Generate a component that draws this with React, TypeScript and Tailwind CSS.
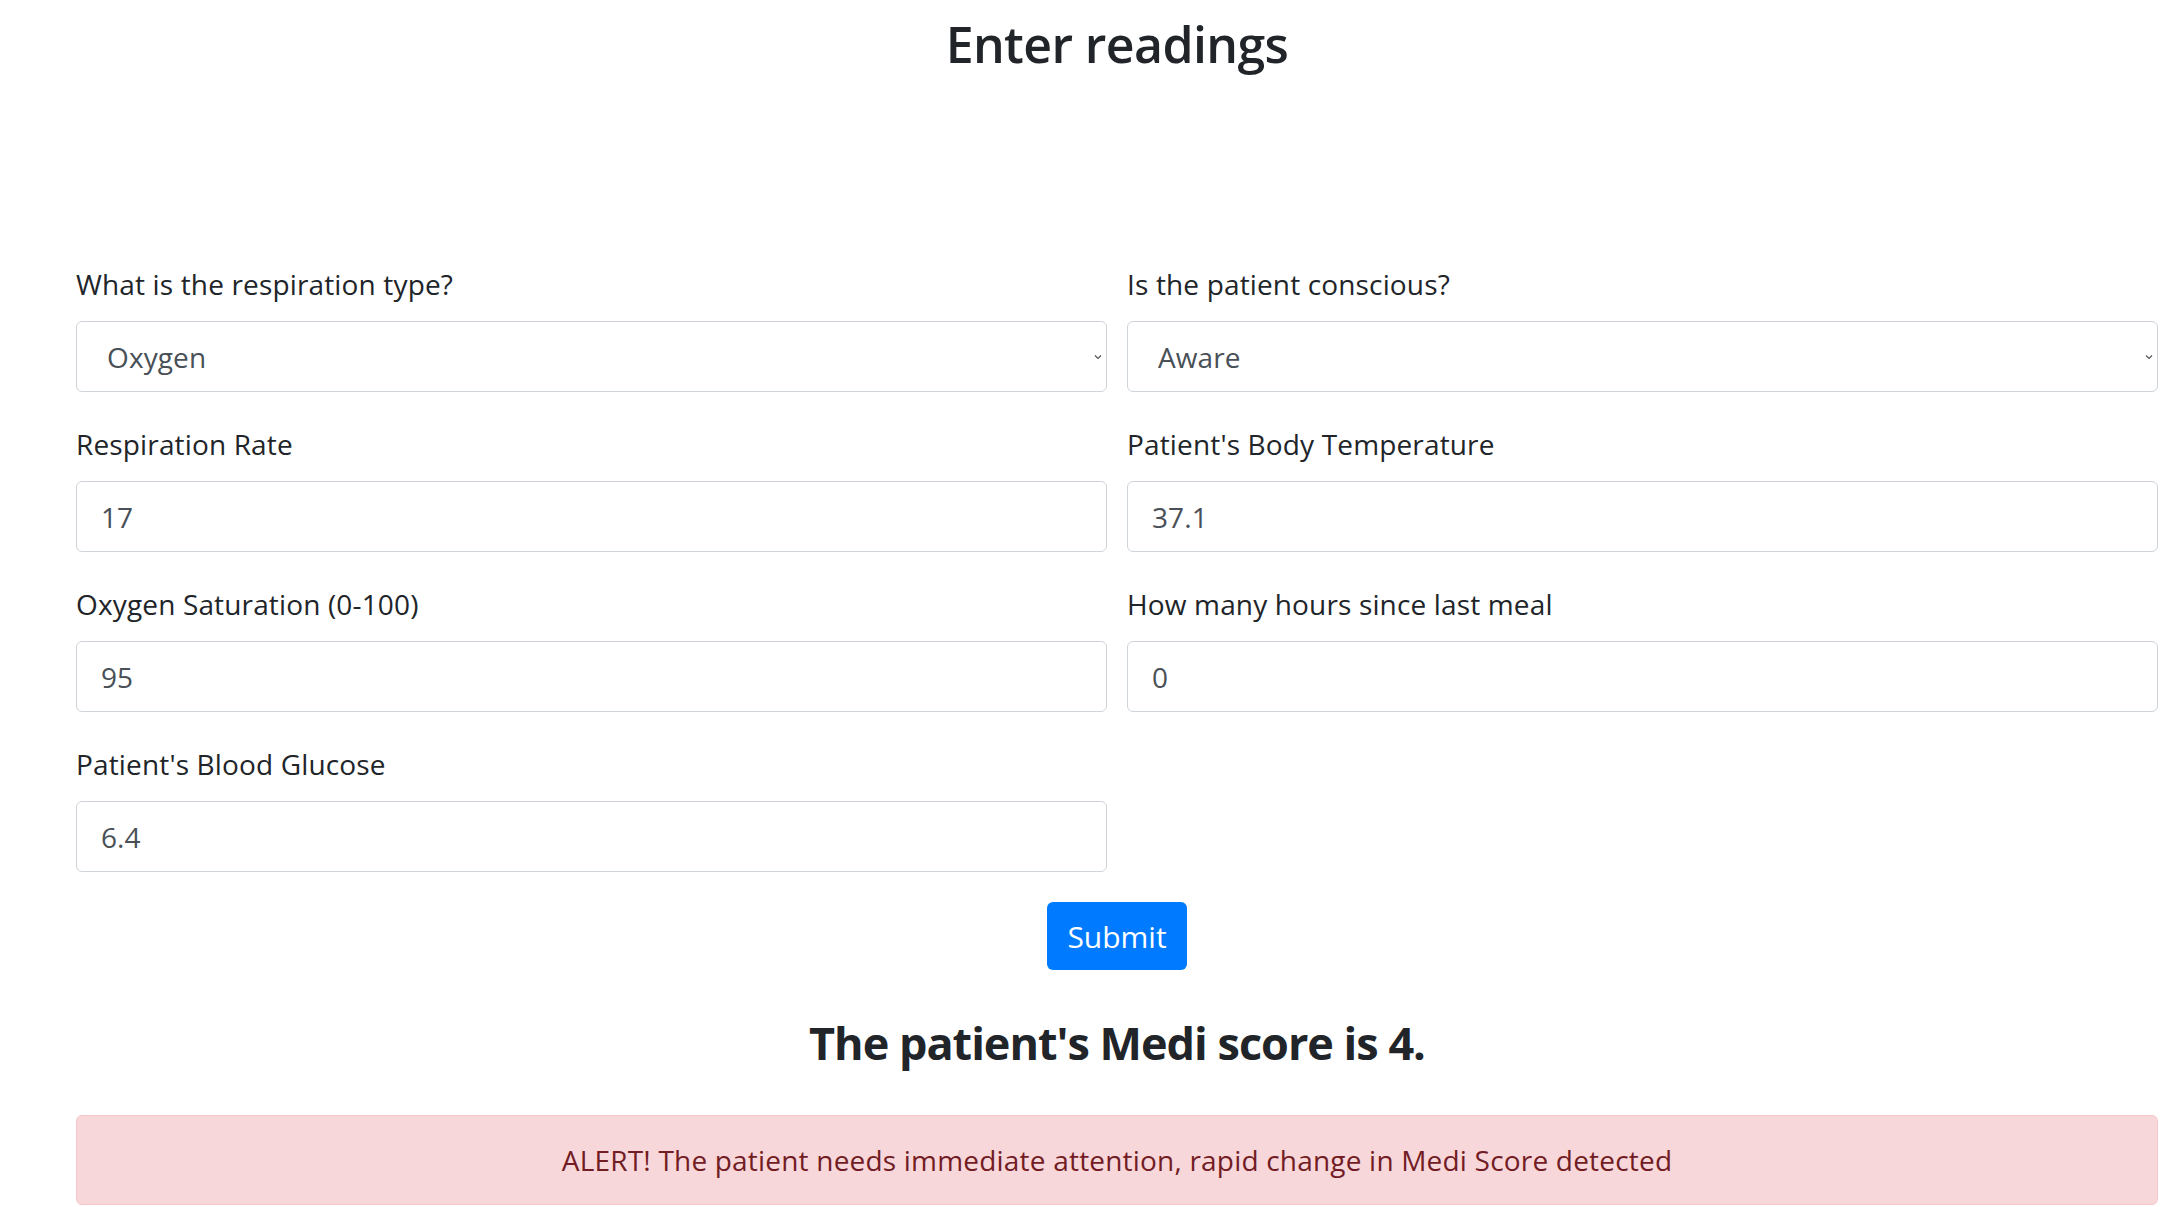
import React from 'react';

const Label = ({ children }: { children: React.ReactNode }) => (
  <label className="mb-[17px] block text-[28px] leading-[40px] tracking-[0.15px] text-[#212529]">{children}</label>
);

const inputCls =
  'block h-[71px] w-full rounded-[6px] border border-[#ced4da] bg-white px-[24px] text-[28px] tracking-[0.1px] text-[#495057] outline-none';

const TextField = ({ label, value }: { label: string; value: string }) => (
  <div>
    <Label>{label}</Label>
    <input type="text" defaultValue={value} className={inputCls} />
  </div>
);

const SelectField = ({ label, value, options }: { label: string; value: string; options: string[] }) => (
  <div>
    <Label>{label}</Label>
    <div className="relative">
      <select defaultValue={value} className={inputCls + ' appearance-none pl-[30px]'}>
        {options.map(o => (
          <option key={o}>{o}</option>
        ))}
      </select>
      <svg className="pointer-events-none absolute right-[5px] top-1/2 -translate-y-1/2" width="8" height="5" viewBox="0 0 8 5">
        <path d="M1 1l3 3 3-3" fill="none" stroke="#555" strokeWidth="1.2" />
      </svg>
    </div>
  </div>
);

export default function App() {
  return (
    <div className="min-h-screen bg-white pl-[76px] pr-[15px] font-['Open_Sans',sans-serif] text-[#212529]">
      <h1 className="pt-[14px] text-center text-[50px] font-semibold leading-[60px] tracking-[-0.6px]">Enter readings</h1>

      <form className="mt-[190px]" onSubmit={e => e.preventDefault()}>
        <div className="grid grid-cols-2 gap-x-[20px] gap-y-[32px]">
          <SelectField label="What is the respiration type?" value="Oxygen" options={['Air', 'Oxygen']} />
          <SelectField label="Is the patient conscious?" value="Aware" options={['Aware', 'CVPU']} />
          <TextField label="Respiration Rate" value="17" />
          <TextField label="Patient's Body Temperature" value="37.1" />
          <TextField label="Oxygen Saturation (0-100)" value="95" />
          <TextField label="How many hours since last meal" value="0" />
          <TextField label="Patient's Blood Glucose" value="6.4" />
        </div>

        <div className="mt-[30px] flex justify-center">
          <button type="submit" className="h-[68px] w-[140px] rounded-[6px] bg-[#007bff] text-[30px] text-white">
            Submit
          </button>
        </div>
      </form>

      <h2 className="mt-[45px] text-center text-[45px] font-bold leading-[55px] tracking-[-1px]">The patient's Medi score is 4.</h2>

      <div className="mt-[45px] flex h-[90px] items-center justify-center rounded-[6px] border border-[#f5c6cb] bg-[#f8d7da] text-[28px] tracking-[0.2px] text-[#721c24]">
        ALERT! The patient needs immediate attention, rapid change in Medi Score detected
      </div>
    </div>
  );
}
